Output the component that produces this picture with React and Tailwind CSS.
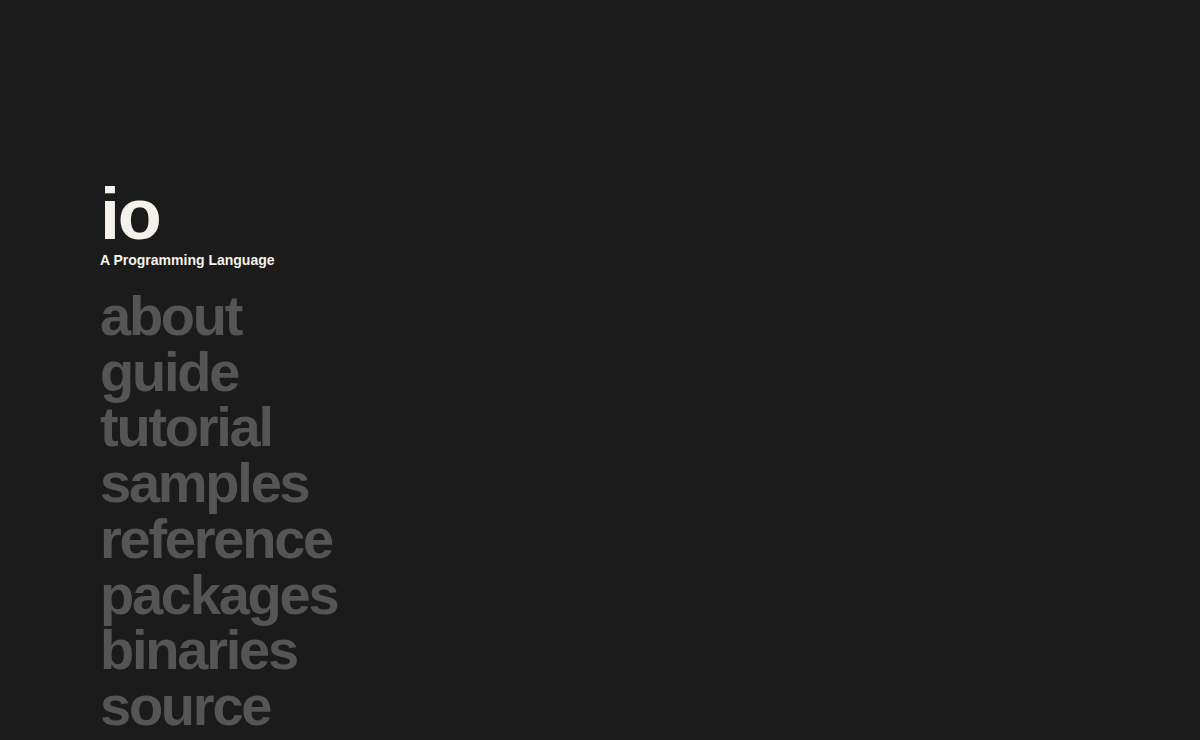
const links = ['about', 'guide', 'tutorial', 'samples', 'reference', 'packages', 'binaries', 'source'];

export default function App() {
  return (
    <div
      className="h-[740px] w-full overflow-hidden bg-[#1b1b1b] pl-[100px] pt-[178px]"
      style={{ fontFamily: "'Liberation Sans', Arial, sans-serif" }}
    >
      <h1 className="text-[72px] font-bold leading-[72px] tracking-[-0.03em] text-[#f4f2ea]">io</h1>
      <div className="mt-[2px] text-[14px] font-bold leading-[16px] text-[#f4f2ea]">A Programming Language</div>
      <nav className="mt-[20px] flex flex-col items-start">
        {links.map((l) => (
          <a key={l} href="#" className="text-[56px] font-bold leading-[55.7px] tracking-[-0.04em] text-[#555555]">
            {l}
          </a>
        ))}
      </nav>
    </div>
  );
}
